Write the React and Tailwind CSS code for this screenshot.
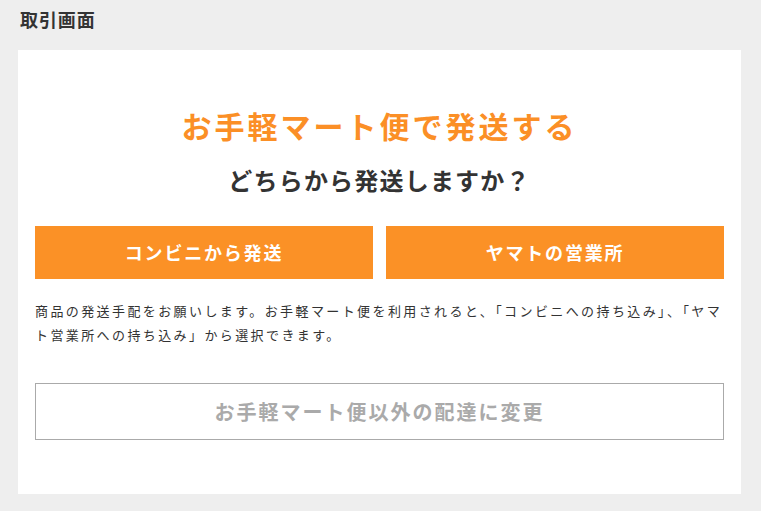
const font = { fontFamily: '"Noto Sans CJK JP", "Noto Sans", sans-serif' };

const App = () => {
  return (
    <div className="min-h-[511px] bg-[#eeeeee] text-[#333333]" style={font}>
      <div className="pl-[18px] pr-[20px] pt-[5px] pb-[17px]">
        <h1 className="pl-[2px] text-[18px] font-bold leading-[28px] tracking-[0.05em] text-[#333333]">
          取引画面
        </h1>
        <div className="mt-[17px] bg-white px-[17px] pt-[53px] pb-[54px]">
          <h2 className="text-center text-[30px] font-bold leading-[45px] tracking-[0.1em] text-[#fb8f26]">
            お手軽マート便で発送する
          </h2>
          <p className="mt-[14px] text-center text-[24px] font-bold leading-[36px] tracking-[0.05em] text-[#333333]">
            どちらから発送しますか？
          </p>

          <div className="mt-[28px] grid grid-cols-2 gap-[13px]">
            {["コンビニから発送", "ヤマトの営業所"].map((label) => (
              <button
                key={label}
                className="flex h-[53px] items-center justify-center bg-[#fb9126] text-[18px] font-bold tracking-[0.1em] text-white"
              >
                {label}
              </button>
            ))}
          </div>

          <p className="mt-[20px] text-[13px] leading-[24px] tracking-[2.4px] text-[#333333]">
            商品の発送手配をお願いします。お手軽マート便を利用されると、「コンビニへの持ち込み」、「ヤマ
            <br />
            ト営業所への持ち込み」から選択できます。
          </p>

          <button className="mt-[36px] flex h-[57px] w-full items-center justify-center border border-[#aaaaaa] bg-white text-[20px] font-bold tracking-[0.1em] text-[#aaaaaa]">
            お手軽マート便以外の配達に変更
          </button>
        </div>
      </div>
    </div>
  );
};

export default App;
